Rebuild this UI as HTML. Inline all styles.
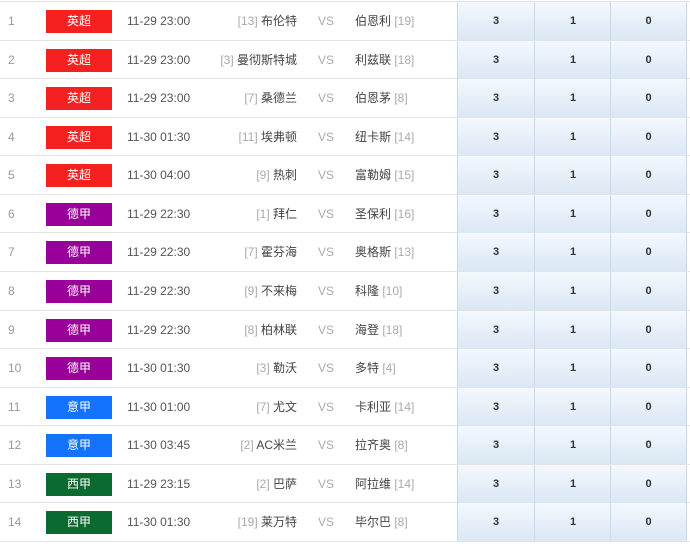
<!DOCTYPE html>
<html><head><meta charset="utf-8"><style>
body{margin:0;width:690px;height:549px;background:#fff;font-family:"Liberation Sans","Noto Sans CJK SC",sans-serif;overflow:hidden;position:relative}
.r{position:absolute;left:0;width:690px;height:38.57px;border-bottom:1px solid #e4e4e4;box-sizing:border-box;font-size:12px;color:#555}
.r div{position:absolute;top:0;line-height:38px;white-space:nowrap}
.n{left:8px;color:#999}
.b{left:46px;width:66px;height:23px;top:8px!important;line-height:23px!important;color:#fff;text-align:center;font-size:12px}
.t{left:127px;color:#555}
.h{right:393px;text-align:right;color:#444}
.vs{left:318px;color:#aaa}
.a{left:355px;color:#444}
.g{color:#aaa}
.s{width:77px;text-align:center;font-weight:bold;font-size:11px;color:#333;background:linear-gradient(#f3f8fd,#dbe7f4);border-left:1px solid #c9d9ec;height:38px;box-sizing:border-box}
.s1{left:457px}.s2{left:534px}.s3{left:610px;border-right:1px solid #c9d9ec}
.E{background:#f52121}.D{background:#990099}.I{background:#1373fc}.X{background:#0a6a2f}
</style></head><body>
<div style="position:absolute;left:0;top:1px;width:690px;border-top:1px solid #e4e4e4"></div>
<div class="r" style="top:2px"><div class="n">1</div><div class="b E">英超</div><div class="t">11-29 23:00</div><div class="h"><span class="g">[13]</span> 布伦特</div><div class="vs">VS</div><div class="a">伯恩利 <span class="g">[19]</span></div><div class="s s1">3</div><div class="s s2">1</div><div class="s s3">0</div></div>
<div class="r" style="top:40.57px"><div class="n">2</div><div class="b E">英超</div><div class="t">11-29 23:00</div><div class="h"><span class="g">[3]</span> 曼彻斯特城</div><div class="vs">VS</div><div class="a">利兹联 <span class="g">[18]</span></div><div class="s s1">3</div><div class="s s2">1</div><div class="s s3">0</div></div>
<div class="r" style="top:79.14px"><div class="n">3</div><div class="b E">英超</div><div class="t">11-29 23:00</div><div class="h"><span class="g">[7]</span> 桑德兰</div><div class="vs">VS</div><div class="a">伯恩茅 <span class="g">[8]</span></div><div class="s s1">3</div><div class="s s2">1</div><div class="s s3">0</div></div>
<div class="r" style="top:117.71px"><div class="n">4</div><div class="b E">英超</div><div class="t">11-30 01:30</div><div class="h"><span class="g">[11]</span> 埃弗顿</div><div class="vs">VS</div><div class="a">纽卡斯 <span class="g">[14]</span></div><div class="s s1">3</div><div class="s s2">1</div><div class="s s3">0</div></div>
<div class="r" style="top:156.28px"><div class="n">5</div><div class="b E">英超</div><div class="t">11-30 04:00</div><div class="h"><span class="g">[9]</span> 热刺</div><div class="vs">VS</div><div class="a">富勒姆 <span class="g">[15]</span></div><div class="s s1">3</div><div class="s s2">1</div><div class="s s3">0</div></div>
<div class="r" style="top:194.85px"><div class="n">6</div><div class="b D">德甲</div><div class="t">11-29 22:30</div><div class="h"><span class="g">[1]</span> 拜仁</div><div class="vs">VS</div><div class="a">圣保利 <span class="g">[16]</span></div><div class="s s1">3</div><div class="s s2">1</div><div class="s s3">0</div></div>
<div class="r" style="top:233.42px"><div class="n">7</div><div class="b D">德甲</div><div class="t">11-29 22:30</div><div class="h"><span class="g">[7]</span> 霍芬海</div><div class="vs">VS</div><div class="a">奥格斯 <span class="g">[13]</span></div><div class="s s1">3</div><div class="s s2">1</div><div class="s s3">0</div></div>
<div class="r" style="top:271.99px"><div class="n">8</div><div class="b D">德甲</div><div class="t">11-29 22:30</div><div class="h"><span class="g">[9]</span> 不来梅</div><div class="vs">VS</div><div class="a">科隆 <span class="g">[10]</span></div><div class="s s1">3</div><div class="s s2">1</div><div class="s s3">0</div></div>
<div class="r" style="top:310.56px"><div class="n">9</div><div class="b D">德甲</div><div class="t">11-29 22:30</div><div class="h"><span class="g">[8]</span> 柏林联</div><div class="vs">VS</div><div class="a">海登 <span class="g">[18]</span></div><div class="s s1">3</div><div class="s s2">1</div><div class="s s3">0</div></div>
<div class="r" style="top:349.13px"><div class="n">10</div><div class="b D">德甲</div><div class="t">11-30 01:30</div><div class="h"><span class="g">[3]</span> 勒沃</div><div class="vs">VS</div><div class="a">多特 <span class="g">[4]</span></div><div class="s s1">3</div><div class="s s2">1</div><div class="s s3">0</div></div>
<div class="r" style="top:387.7px"><div class="n">11</div><div class="b I">意甲</div><div class="t">11-30 01:00</div><div class="h"><span class="g">[7]</span> 尤文</div><div class="vs">VS</div><div class="a">卡利亚 <span class="g">[14]</span></div><div class="s s1">3</div><div class="s s2">1</div><div class="s s3">0</div></div>
<div class="r" style="top:426.27px"><div class="n">12</div><div class="b I">意甲</div><div class="t">11-30 03:45</div><div class="h"><span class="g">[2]</span> AC米兰</div><div class="vs">VS</div><div class="a">拉齐奥 <span class="g">[8]</span></div><div class="s s1">3</div><div class="s s2">1</div><div class="s s3">0</div></div>
<div class="r" style="top:464.84px"><div class="n">13</div><div class="b X">西甲</div><div class="t">11-29 23:15</div><div class="h"><span class="g">[2]</span> 巴萨</div><div class="vs">VS</div><div class="a">阿拉维 <span class="g">[14]</span></div><div class="s s1">3</div><div class="s s2">1</div><div class="s s3">0</div></div>
<div class="r" style="top:503.41px"><div class="n">14</div><div class="b X">西甲</div><div class="t">11-30 01:30</div><div class="h"><span class="g">[19]</span> 莱万特</div><div class="vs">VS</div><div class="a">毕尔巴 <span class="g">[8]</span></div><div class="s s1">3</div><div class="s s2">1</div><div class="s s3">0</div></div>
</body></html>
